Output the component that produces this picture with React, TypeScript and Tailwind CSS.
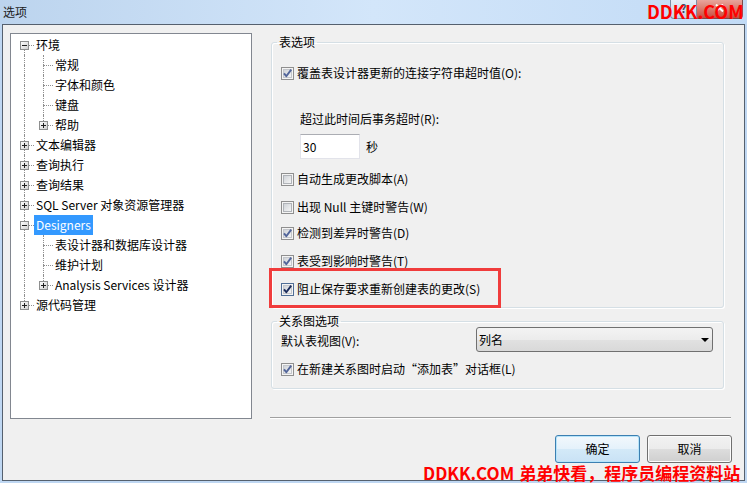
import React from 'react';

type TreeItem = { t: string; l: 0 | 1; e?: 'plus' | 'minus'; sel?: boolean };

const tree: TreeItem[] = [
  { t: '环境', l: 0, e: 'minus' },
  { t: '常规', l: 1 },
  { t: '字体和颜色', l: 1 },
  { t: '键盘', l: 1 },
  { t: '帮助', l: 1, e: 'plus' },
  { t: '文本编辑器', l: 0, e: 'plus' },
  { t: '查询执行', l: 0, e: 'plus' },
  { t: '查询结果', l: 0, e: 'plus' },
  { t: 'SQL Server 对象资源管理器', l: 0, e: 'plus' },
  { t: 'Designers', l: 0, e: 'minus', sel: true },
  { t: '表设计器和数据库设计器', l: 1 },
  { t: '维护计划', l: 1 },
  { t: 'Analysis Services 设计器', l: 1, e: 'plus' },
  { t: '源代码管理', l: 0, e: 'plus' },
];

function Expander({ plus }: { plus: boolean }) {
  return (
    <svg width="9" height="9" viewBox="0 0 9 9">
      <defs>
        <linearGradient id="exg" x1="0" y1="0" x2="1" y2="1">
          <stop offset="0" stopColor="#ffffff" />
          <stop offset="1" stopColor="#cfcfcf" />
        </linearGradient>
      </defs>
      <rect x="0.5" y="0.5" width="8" height="8" fill="url(#exg)" stroke="#8e8f8f" />
      <path d="M2 4.5h5" stroke="#1e1e1e" />
      {plus && <path d="M4.5 2v5" stroke="#1e1e1e" />}
    </svg>
  );
}

function CheckBox({ checked, focus }: { checked?: boolean; focus?: boolean }) {
  return (
    <svg width="13" height="13" viewBox="0 0 13 13" className="shrink-0">
      <defs>
        <linearGradient id="cbg" x1="0" y1="0" x2="1" y2="1">
          <stop offset="0" stopColor="#cdd1d6" />
          <stop offset="1" stopColor="#f7f7f7" />
        </linearGradient>
      </defs>
      <rect x="0.5" y="0.5" width="12" height="12" fill="#f4f4f4" stroke={focus ? '#4f6e96' : '#8f8f8f'} />
      <rect x="2.5" y="2.5" width="8" height="8" fill="url(#cbg)" stroke={checked ? '#c3c6cb' : '#b0b3b8'} />
      {checked && (
        <path
          d="M3 6.3 L5.3 9.2 L10.2 2.6"
          fill="none"
          stroke={focus ? '#1b2c5c' : '#52659a'}
          strokeWidth="1.9"
          strokeLinejoin="round"
        />
      )}
    </svg>
  );
}

function TreeRow({ item, i }: { item: TreeItem; i: number }) {
  const last = tree.length - 1;
  const next = tree[i + 1];
  const rootTop = item.l === 1 || i !== 0;
  const rootBottom = item.l === 1 || i !== last;
  const childTop = item.l === 1;
  const childBottom = item.l === 1 && next !== undefined && next.l === 1;
  return (
    <div className="relative h-[20px]">
      {rootTop && <span className="absolute left-[13px] top-0 h-[10px] border-l border-dotted border-[#8f8f8f]" />}
      {rootBottom && <span className="absolute left-[13px] top-[10px] h-[10px] border-l border-dotted border-[#8f8f8f]" />}
      {childTop && <span className="absolute left-[32px] top-0 h-[10px] border-l border-dotted border-[#8f8f8f]" />}
      {childBottom && <span className="absolute left-[32px] top-[10px] h-[10px] border-l border-dotted border-[#8f8f8f]" />}
      {item.l === 0 ? (
        <span className="absolute left-[14px] top-[10px] w-[9px] border-t border-dotted border-[#8f8f8f]" />
      ) : (
        <span className="absolute left-[33px] top-[10px] w-[9px] border-t border-dotted border-[#8f8f8f]" />
      )}
      {item.e && (
        <span className={item.l === 0 ? 'absolute left-[9px] top-[6px] flex' : 'absolute left-[28px] top-[6px] flex'}>
          <Expander plus={item.e === 'plus'} />
        </span>
      )}
      <div className={item.l === 0 ? 'flex h-full pl-[23px]' : 'flex h-full pl-[42px]'}>
        <span
          className={
            item.sel
              ? 'h-[20px] px-[2px] leading-[20px] whitespace-pre bg-[#3399ff] text-white'
              : 'h-[20px] px-[2px] leading-[20px] whitespace-pre text-black'
          }
        >
          {item.t}
        </span>
      </div>
    </div>
  );
}

function CheckRow({ label, checked, focus, className }: { label: string; checked?: boolean; focus?: boolean; className: string }) {
  return (
    <div className={className}>
      <CheckBox checked={checked} focus={focus} />
      <span className="ml-[3px] leading-[20px] whitespace-pre">{label}</span>
    </div>
  );
}

export default function App() {
  return (
    <div className="relative w-[747px] h-[483px] overflow-hidden bg-[#bfd7f2] text-[12px] text-black font-['Noto_Sans_CJK_SC','Noto_Sans',sans-serif]">
      {/* Title bar */}
      <div className="flex h-[24px] justify-between bg-gradient-to-r from-[#bcd4ee] via-[#d3e6fa] to-[#c2dbf6] pr-[4px]">
        <div className="flex items-center pl-[3px] leading-none text-[12px] text-[#1c1c1c]">选项</div>
        <div className="flex items-start">
          <div className="flex h-[19px] w-[27px] items-start justify-center rounded-bl-[4px] border border-t-0 border-[#7d8ea4] bg-gradient-to-b from-[#e6eef7] to-[#c2d3e6] pt-[1px] text-[11px] font-bold leading-[14px] text-[#3a4d66]">
            ?
          </div>
          <div className="flex h-[19px] w-[46px] items-start justify-center rounded-br-[4px] border border-l-0 border-t-0 border-[#7d4a4a] bg-gradient-to-b from-[#e8a59c] to-[#c84a3e] pt-[4px]">
            <svg width="9" height="8" viewBox="0 0 9 8">
              <path d="M1 0.5 L8 7.5 M8 0.5 L1 7.5" stroke="#ffffff" strokeWidth="2" />
            </svg>
          </div>
        </div>
      </div>

      {/* Window body */}
      <div className="ml-[2px] flex h-[457px] w-[743px] flex-col border border-[#55606e] bg-[#f0f0f0]">
        <div className="flex h-[394px]">
          {/* Tree */}
          <div className="ml-[7px] mt-[8px] h-[386px] w-[242px] border border-[#828790] bg-white pt-[1px]">
            {tree.map((item, i) => (
              <TreeRow key={i} item={item} i={i} />
            ))}
          </div>

          {/* Right column */}
          <div className="relative ml-[18px] flex w-[461px] flex-col pt-[9px]">
            <fieldset className="ml-[1px] w-[453px] rounded-[3px] border border-[#d5dfe5] pb-[8px] shadow-[inset_1px_1px_0_#ffffff,1px_1px_0_#ffffff]">
              <legend className="ml-[5px] px-[2px] leading-[16px]">表选项</legend>
              <div className="flex flex-col pl-[9px]">
                <CheckRow className="mt-[13px] flex h-[20px] items-center" label="覆盖表设计器更新的连接字符串超时值(O):" checked />
                <div className="ml-[19px] mt-[26px] h-[20px] leading-[20px]">超过此时间后事务超时(R):</div>
                <div className="ml-[19px] mt-[5px] flex items-center">
                  <div className="flex h-[25px] w-[60px] items-center border border-[#e2e3ea] border-t-[#abadb3] bg-white pl-[2px] leading-none">
                    30
                  </div>
                  <span className="ml-[6px]">秒</span>
                </div>
                <CheckRow className="mt-[10px] flex h-[20px] items-center" label="自动生成更改脚本(A)" />
                <CheckRow className="mt-[8px] flex h-[20px] items-center" label="出现 Null 主键时警告(W)" />
                <CheckRow className="mt-[6px] flex h-[20px] items-center" label="检测到差异时警告(D)" checked />
                <CheckRow className="mt-[8px] flex h-[20px] items-center" label="表受到影响时警告(T)" checked />
                <CheckRow className="mt-[8px] flex h-[20px] items-center" label="阻止保存要求重新创建表的更改(S)" checked focus />
              </div>
            </fieldset>

            <fieldset className="ml-[1px] mt-[5px] w-[453px] rounded-[3px] border border-[#d5dfe5] pb-[9px] shadow-[inset_1px_1px_0_#ffffff,1px_1px_0_#ffffff]">
              <legend className="ml-[5px] px-[2px] leading-[16px]">关系图选项</legend>
              <div className="flex flex-col pl-[9px]">
                <div className="mt-[-2px] flex h-[25px] items-center">
                  <span className="mt-[3px] w-[195px] leading-[20px]">默认表视图(V):</span>
                  <div className="flex h-[25px] w-[237px] items-center justify-between rounded-[3px] border border-[#707070] bg-[linear-gradient(to_bottom,#f3f3f3_0%,#ececec_50%,#e1e1e1_51%,#d9d9d9_100%)] pl-[2px] pr-[3px]">
                    <span className="leading-none">列名</span>
                    <svg width="8" height="4" viewBox="0 0 8 4">
                      <path d="M0 0h8L4 4z" fill="#000" />
                    </svg>
                  </div>
                </div>
                <CheckRow className="mt-[7px] flex h-[20px] items-center" label="在新建关系图时启动“添加表”对话框(L)" checked />
              </div>
            </fieldset>

            <div className="mt-auto h-[2px] border-t border-b border-t-[#a0a0a0] border-b-white" />

            {/* red annotation */}
            <div className="pointer-events-none absolute left-[-1px] top-[243px] h-[40px] w-[232px] border-[3px] border-[#f03c3c]" />
          </div>
        </div>

        {/* Buttons */}
        <div className="mt-[16px] flex justify-end gap-[7px] pr-[12px]">
          <div className="flex h-[28px] w-[85px] items-center justify-center rounded-[3px] border border-[#3c7fb1] bg-[linear-gradient(to_bottom,#f2f8fc_0%,#e4f1fb_50%,#d3e9f8_51%,#c9e2f5_100%)] shadow-[inset_0_0_0_1px_#b6e4fa]">
            确定
          </div>
          <div className="flex h-[28px] w-[85px] items-center justify-center rounded-[3px] border border-[#707070] bg-[linear-gradient(to_bottom,#f2f2f2_0%,#ebebeb_50%,#dddddd_51%,#cfcfcf_100%)] shadow-[inset_0_0_0_1px_#fcfcfc]">
            取消
          </div>
        </div>
      </div>

      {/* Watermarks */}
      <div className="absolute left-[647px] top-[2px] text-[18px] font-bold leading-[18px] text-[#ff0000] whitespace-nowrap">
        DDKK.COM
      </div>
      <div className="absolute left-[423px] top-[464px] flex items-baseline font-bold leading-[18px] text-[#ff0000] whitespace-nowrap">
        <span className="text-[17px]">DDKK.COM</span>
        <span className="ml-[5px] text-[17px]">弟弟快看，程序员编程资料站</span>
      </div>
    </div>
  );
}
